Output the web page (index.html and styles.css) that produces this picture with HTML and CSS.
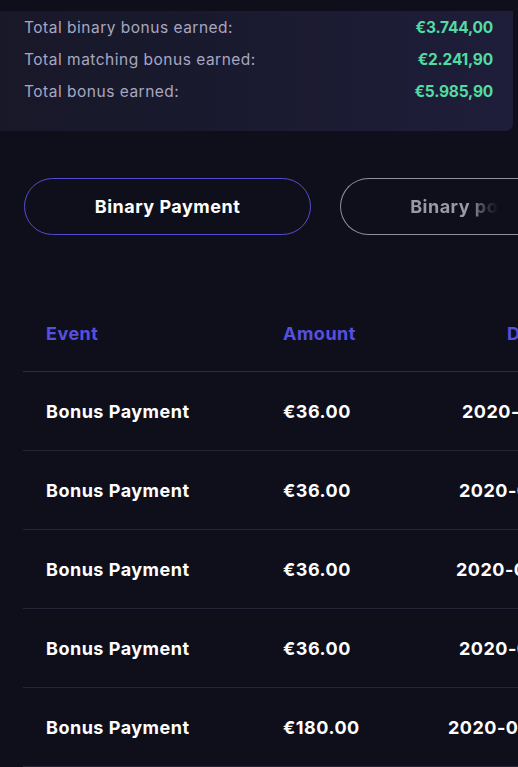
FILE: index.html
```html
<!DOCTYPE html>
<html>
<head>
<meta charset="utf-8">
<link rel="stylesheet" href="styles.css">
</head>
<body>
<div class="page">
  <div class="summary">
    <div class="sum-row"><span class="sum-label">Total binary bonus earned:</span><span class="sum-value">€3.744,00</span></div>
    <div class="sum-row"><span class="sum-label">Total matching bonus earned:</span><span class="sum-value">€2.241,90</span></div>
    <div class="sum-row"><span class="sum-label">Total bonus earned:</span><span class="sum-value">€5.985,90</span></div>
  </div>
  <div class="tabs">
    <div class="tab active">Binary Payment</div>
    <div class="tab inactive"><span class="tab-text">Binary points</span></div>
  </div>
  <div class="table">
    <div class="thead">
      <div class="c-event">Event</div>
      <div class="c-amount">Amount</div>
      <div class="c-date">Date</div>
    </div>
    <div class="trow r1"><div class="c-event">Bonus Payment</div><div class="c-amount">€36.00</div><div class="c-date">2020-08-29</div></div>
    <div class="trow r2"><div class="c-event">Bonus Payment</div><div class="c-amount">€36.00</div><div class="c-date">2020-08-22</div></div>
    <div class="trow r3"><div class="c-event">Bonus Payment</div><div class="c-amount">€36.00</div><div class="c-date">2020-08-15</div></div>
    <div class="trow r4"><div class="c-event">Bonus Payment</div><div class="c-amount">€36.00</div><div class="c-date">2020-08-08</div></div>
    <div class="trow r5"><div class="c-event">Bonus Payment</div><div class="c-amount">€180.00</div><div class="c-date">2020-08-01</div></div>
  </div>
</div>
</body>
</html>
```
FILE: styles.css
```css
html, body {
  margin: 0;
  padding: 0;
  background: #0f0f1b;
  overflow: hidden;
}
body {
  width: 518px;
  height: 767px;
  font-family: Inter, "Noto Sans", sans-serif;
}
.page {
  padding-top: 13px;
}
.summary {
  width: 513px;
  height: 120px;
  box-sizing: border-box;
  padding: 0 20px 0 24px;
  border-radius: 0 0 8px 0;
  background: linear-gradient(90deg, #181829 0%, #1a1a30 50%, #1f1e3a 100%);
}
.sum-row {
  display: flex;
  justify-content: space-between;
  align-items: center;
  height: 32px;
}
.sum-row:first-child { margin-top: -2px; }
.sum-label {
  color: #a8a7c0;
  font-size: 15.5px;
  font-weight: 400;
  letter-spacing: 0.5px;
}
.sum-value {
  color: #52dba2;
  font-weight: 700;
  font-size: 15.5px;
  letter-spacing: -0.2px;
}
.tabs {
  display: flex;
  gap: 29px;
  padding: 47px 0 0 24px;
  overflow: hidden;
}
.tab {
  flex: none;
  height: 57px;
  box-sizing: border-box;
  border-radius: 29px;
  display: flex;
  align-items: center;
  justify-content: center;
  font-weight: 700;
  font-size: 18px;
  letter-spacing: 0.5px;
}
.tab.active {
  width: 287px;
  border: 1.5px solid #524dd0;
  color: #ffffff;
}
.tab.inactive {
  width: 287px;
  padding-right: 24px;
  border: 1.5px solid #8f8f9e;
  border-right-color: transparent;
  color: #9a99a8;
}
.tab-text {
  -webkit-mask-image: linear-gradient(90deg, #000 0%, #000 50%, rgba(0,0,0,0.4) 60%, rgba(0,0,0,0) 72%);
  mask-image: linear-gradient(90deg, #000 0%, #000 50%, rgba(0,0,0,0.4) 60%, rgba(0,0,0,0) 72%);
}
.table {
  margin-top: 61px;
  margin-left: 23px;
  overflow: hidden;
}
.thead, .trow {
  display: flex;
  align-items: center;
  white-space: nowrap;
  letter-spacing: 0.5px;
}
.thead {
  height: 75px;
  color: #5650e0;
  font-weight: 700;
  font-size: 18px;
  border-bottom: 1.5px solid #2b2a48;
}
.trow {
  height: 77px;
  padding-top: 1px;
  color: #ffffff;
  font-weight: 700;
  font-size: 18px;
  border-bottom: 1.5px solid #262538;
}
.c-event {
  width: 237px;
  padding-left: 23px;
  flex: none;
}
.c-amount {
  width: 140px;
  flex: none;
}
.c-date { flex: none; }
.thead .c-date { padding-left: 84px; }
.r1 .c-date { padding-left: 39px; }
.r2 .c-date { padding-left: 36px; }
.r3 .c-date { padding-left: 33px; }
.r4 .c-date { padding-left: 36px; }
.r5 .c-date { padding-left: 25px; }
```
